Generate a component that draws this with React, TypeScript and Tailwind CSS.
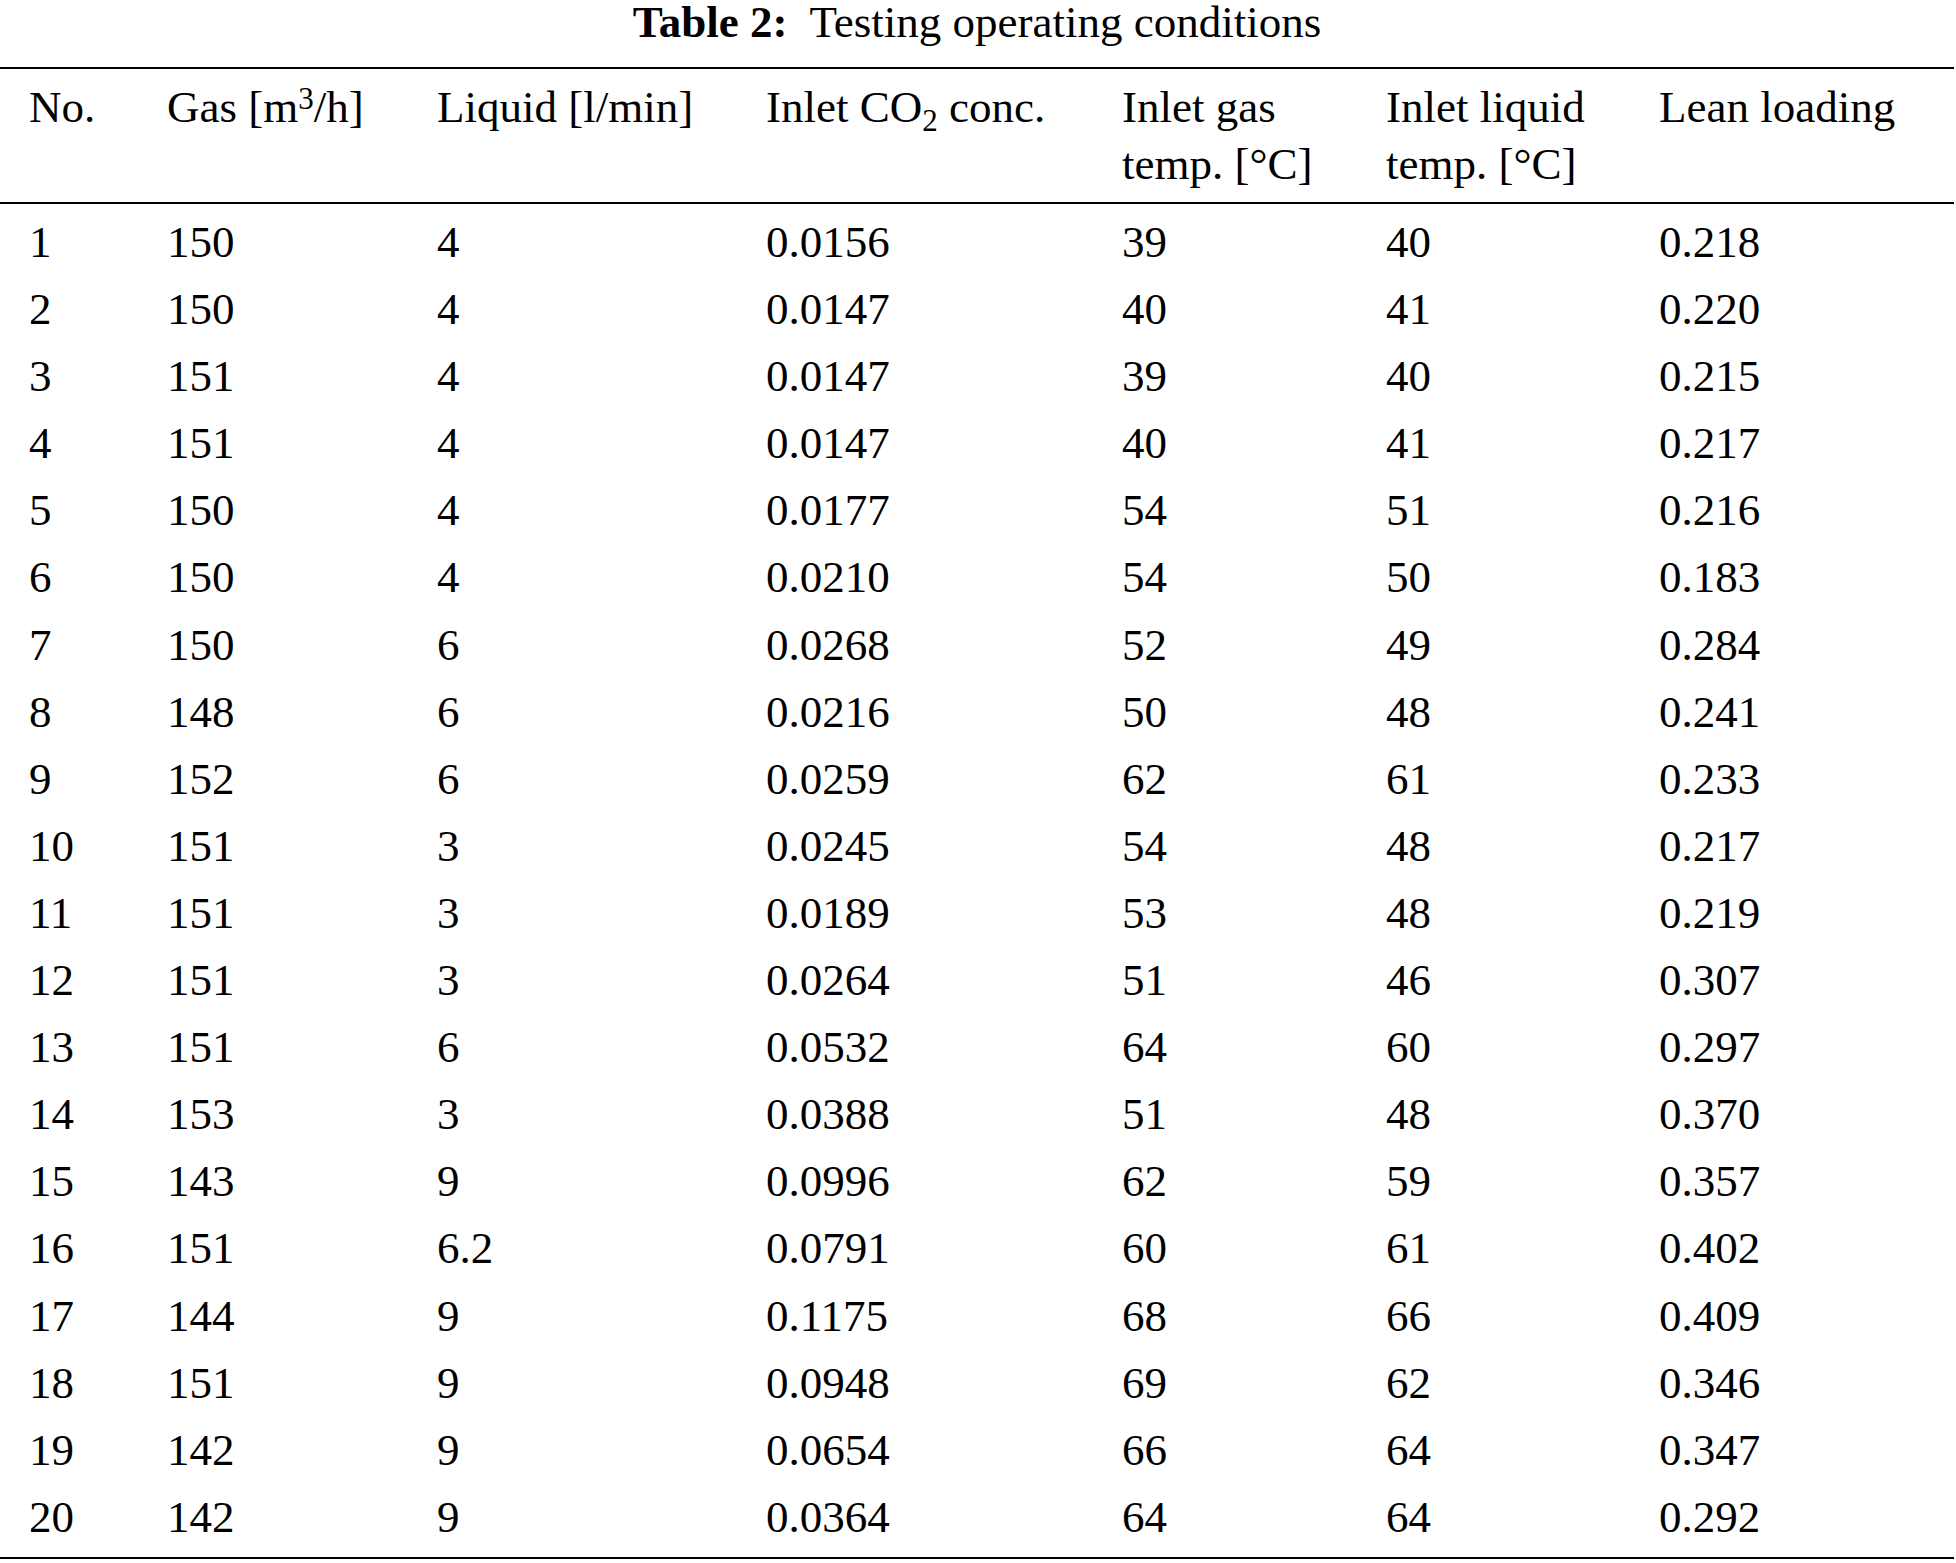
const rows = [
  ["1", "150", "4", "0.0156", "39", "40", "0.218"],
  ["2", "150", "4", "0.0147", "40", "41", "0.220"],
  ["3", "151", "4", "0.0147", "39", "40", "0.215"],
  ["4", "151", "4", "0.0147", "40", "41", "0.217"],
  ["5", "150", "4", "0.0177", "54", "51", "0.216"],
  ["6", "150", "4", "0.0210", "54", "50", "0.183"],
  ["7", "150", "6", "0.0268", "52", "49", "0.284"],
  ["8", "148", "6", "0.0216", "50", "48", "0.241"],
  ["9", "152", "6", "0.0259", "62", "61", "0.233"],
  ["10", "151", "3", "0.0245", "54", "48", "0.217"],
  ["11", "151", "3", "0.0189", "53", "48", "0.219"],
  ["12", "151", "3", "0.0264", "51", "46", "0.307"],
  ["13", "151", "6", "0.0532", "64", "60", "0.297"],
  ["14", "153", "3", "0.0388", "51", "48", "0.370"],
  ["15", "143", "9", "0.0996", "62", "59", "0.357"],
  ["16", "151", "6.2", "0.0791", "60", "61", "0.402"],
  ["17", "144", "9", "0.1175", "68", "66", "0.409"],
  ["18", "151", "9", "0.0948", "69", "62", "0.346"],
  ["19", "142", "9", "0.0654", "66", "64", "0.347"],
  ["20", "142", "9", "0.0364", "64", "64", "0.292"],
];

const cols = "grid grid-cols-[138px_270px_329px_356px_264px_273px_1fr] pl-[29px]";

const App = () => {
  return (
    <div className="w-[1954px] bg-white text-black font-['Liberation_Serif'] text-[45px]">
      <h1 className="text-center leading-[44px] font-normal">
        <span className="font-bold">Table 2:</span>
        <span className="ml-[22px]">Testing operating conditions</span>
      </h1>

      <div className="mt-[23px] border-t-2 border-black" />

      <div className={`${cols} pt-[10px] pb-[9px] leading-[57px]`}>
        <div>No.</div>
        <div>
          Gas [m<span className="inline-block align-top text-[31px] leading-none mt-[4px]">3</span>/h]
        </div>
        <div>Liquid [l/min]</div>
        <div>
          Inlet CO<span className="inline-block align-baseline text-[31px] leading-none relative top-[9px]">2</span> conc.
        </div>
        <div>
          Inlet gas
          <br />
          temp. [°C]
        </div>
        <div>
          Inlet liquid
          <br />
          temp. [°C]
        </div>
        <div>Lean loading</div>
      </div>

      <div className="border-t-2 border-black" />

      <div className="pt-[5px] pb-[6px]">
        {rows.map((row) => (
          <div key={row[0]} className={`${cols} leading-[67.1px]`}>
            {row.map((cell, i) => (
              <div key={i}>{cell}</div>
            ))}
          </div>
        ))}
      </div>

      <div className="border-t-2 border-black" />
    </div>
  );
};

export default App;
